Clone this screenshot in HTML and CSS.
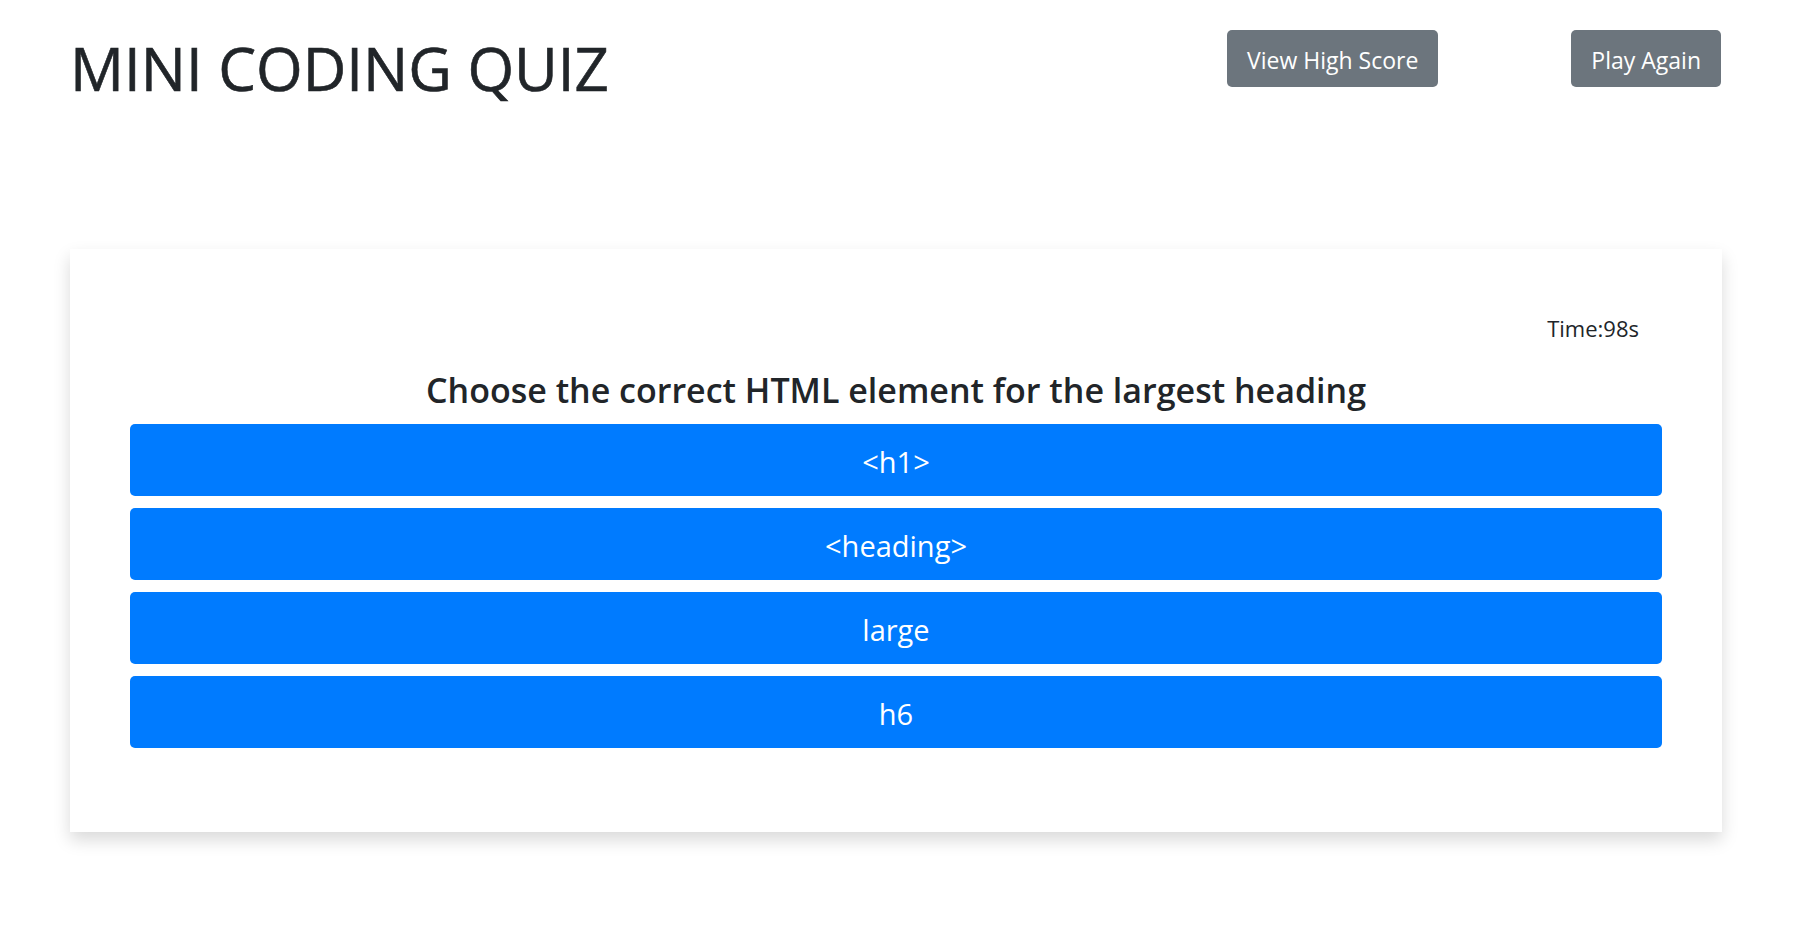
FILE: index.html
```html
<!DOCTYPE html>
<html lang="en">
<head>
<meta charset="utf-8">
<title>Mini Coding Quiz</title>
<link rel="stylesheet" href="styles.css">
</head>
<body>
<div class="page">
  <header class="header">
    <h1 class="title">MINI CODING QUIZ</h1>
    <div class="actions">
      <button class="btn btn-secondary">View High Score</button>
      <button class="btn btn-secondary">Play Again</button>
    </div>
  </header>

  <main class="card">
    <div class="timer">Time:98s</div>
    <h2 class="question">Choose the correct HTML element for the largest heading</h2>
    <div class="answers">
      <button class="answer">&lt;h1&gt;</button>
      <button class="answer">&lt;heading&gt;</button>
      <button class="answer">large</button>
      <button class="answer">h6</button>
    </div>
  </main>
</div>
</body>
</html>
```

FILE: styles.css
```css
* {
  box-sizing: border-box;
}

html, body {
  margin: 0;
  padding: 0;
  background: #ffffff;
}

body {
  font-family: "Open Sans", "Noto Sans", "Liberation Sans", sans-serif;
  color: #212529;
}

.page {
  width: 1652px;
  margin-left: 70px;
  padding-bottom: 60px;
}

.header {
  display: flex;
  align-items: flex-start;
  justify-content: space-between;
  height: 87px;
  padding-top: 30px;
}

.title {
  margin: 2px 0 0 0;
  font-size: 60px;
  font-weight: 400;
  line-height: 72px;
  color: #212529;
  -webkit-text-stroke: 0.6px #212529;
}

.actions {
  display: flex;
  gap: 133px;
  margin-right: 1px;
}

.btn {
  font-family: inherit;
  font-size: 23px;
  line-height: 35px;
  padding: 13px 20px 9px;
  border: none;
  border-radius: 5px;
  cursor: pointer;
}

.btn-secondary {
  background: #6c757d;
  color: #ffffff;
}

.card {
  margin-top: 162px;
  background: #ffffff;
  box-shadow: 0 8px 16px rgba(0, 0, 0, 0.15);
  padding: 63px 60px 84px;
}

.timer {
  text-align: right;
  font-size: 22px;
  line-height: 33px;
  padding-right: 23px;
  color: #212529;
}

.question {
  margin: 24px 0 13px;
  text-align: center;
  font-size: 34px;
  font-weight: 600;
  line-height: 42px;
  color: #212529;
}

.answers {
  display: flex;
  flex-direction: column;
  gap: 12px;
}

.answer {
  display: block;
  width: 100%;
  height: 72px;
  font-family: inherit;
  font-size: 29px;
  line-height: 42px;
  padding: 17px 12px 13px;
  background: #007bff;
  color: #ffffff;
  border: none;
  border-radius: 5px;
  cursor: pointer;
}
```
